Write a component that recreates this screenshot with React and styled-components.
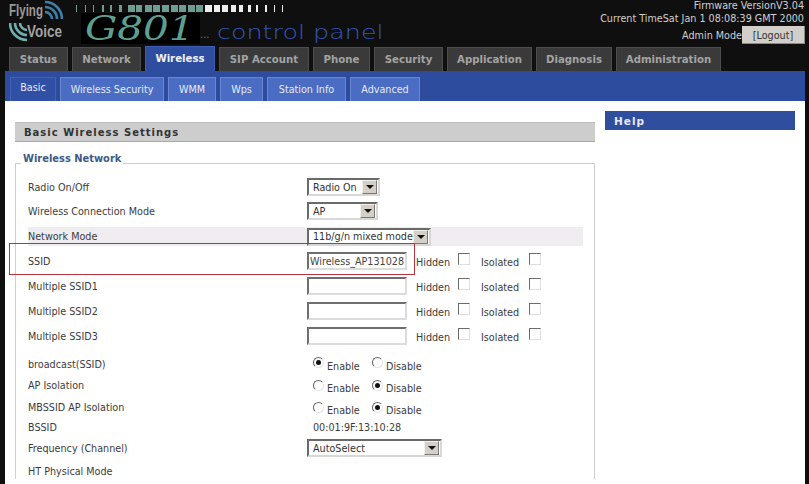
import React from 'react';
import styled, { createGlobalStyle } from 'styled-components';

const GlobalStyle = createGlobalStyle`
  html, body { margin: 0; padding: 0; background: #0f0f0f; }
  body { font-family: "DejaVu Sans Condensed", "DejaVu Sans", sans-serif; font-stretch: condensed; font-size: 10.7px; color: #3c3c3c; }
`;

const Page = styled.div`
  position: relative;
  width: 809px;
  height: 484px;
  overflow: hidden;
  background: #0f0f0f;
`;

const Header = styled.header`
  display: flex;
  justify-content: space-between;
  height: 46px;
  padding-right: 5px;
`;

const Brand = styled.div`
  display: flex;
`;

const Logo = styled.div`
  display: flex;
  flex-direction: column;
  width: 54px;
  margin-left: 9px;
`;

const LogoRow = styled.div`
  display: flex;
  align-items: center;
  height: 21px;
`;

const LogoWord = styled.span`
  display: block;
  flex: none;
  width: ${p => p.$w}px;
  font-family: "Liberation Sans", sans-serif;
  font-stretch: normal;
  font-weight: 700;
  font-size: 16px;
  line-height: 16px;
  color: ${p => p.$color};
  transform: scaleX(${p => p.$x});
  transform-origin: left center;
`;

const Product = styled.div`
  display: flex;
  flex-direction: column;
  margin-left: 13px;
  padding-top: 5px;
`;

const Ticks = styled.div`
  display: flex;
  align-items: flex-start;
  height: 8px;
`;

const Tick = styled.i`
  display: block;
  flex: none;
  width: ${p => p.$w}px;
  height: 7px;
  margin-right: ${p => 8.6 - p.$w}px;
  background: ${p => p.$lit ? '#eeeeee' : '#6f9c90'};
`;

const Model = styled.div`
  display: flex;
  align-items: center;
  height: 31px;
`;

// stretches a word sideways, the header lettering is wider than any installed face
const Stretched = styled.span`
  display: inline-block;
  transform: scaleX(${p => p.$x});
  transform-origin: left center;
`;

const ModelName = styled.span`
  display: block;
  width: 119px;
  margin-left: 5px;
  padding-left: 4px;
  box-sizing: border-box;
  background: #000;
  font-family: "DejaVu Serif", serif;
  font-stretch: normal;
  font-style: italic;
  font-size: 34px;
  line-height: 31px;
  color: #5f9f8e;
  white-space: nowrap;
`;

const Dots = styled.span`
  width: 17px;
  padding-top: 12px;
  font-size: 11px;
  color: #777;
`;

const Tagline = styled.span`
  width: 166px;
  font-family: "DejaVu Sans ExtraLight", "DejaVu Sans", sans-serif;
  font-stretch: normal;
  font-weight: 200;
  font-size: 20px;
  line-height: 26px;
  color: #3358b8;
  white-space: nowrap;
  padding-top: 7px;
`;

const Status = styled.div`
  display: flex;
  flex-direction: column;
  align-items: flex-end;
  color: #cfcfcf;
  line-height: 13px;
  margin-top: -1px;
`;

const AdminLine = styled.div`
  display: flex;
  align-items: center;
  margin-top: 1px;
  margin-right: -1px;
`;

const Logout = styled.span`
  display: block;
  width: 63px;
  height: 18px;
  background: #d2cfca;
  border-bottom: 1px solid #8c8a86;
  border-right: 1px solid #8c8a86;
  box-sizing: border-box;
  color: #333;
  text-align: center;
  line-height: 19px;
`;

const TabRow = styled.nav`
  display: flex;
  align-items: flex-end;
  gap: 4px;
  height: 25px;
  margin-left: 9px;
`;

const Tab = styled.div`
  box-sizing: border-box;
  width: ${p => p.$w}px;
  height: ${p => p.$active ? 25 : 24}px;
  border: 1px solid ${p => p.$active ? '#3f5fb4' : '#4d4d4d'};
  border-bottom: 0;
  background: ${p => p.$active ? '#2e4d9f' : '#3a3a3a'};
  color: ${p => p.$active ? '#eef1f8' : '#a3a3a3'};
  font-family: "DejaVu Sans", sans-serif;
  font-stretch: normal;
  font-weight: 700;
  font-size: 10.2px;
  line-height: 23px;
  text-align: center;
  white-space: nowrap;
`;

const Panel = styled.div`
  width: 800px;
  margin-left: 5px;
`;

const SubBar = styled.div`
  display: flex;
  align-items: flex-end;
  gap: 4px;
  height: 30px;
  padding-left: 5px;
  box-sizing: border-box;
  background: #2d4c9e;
`;

const SubTab = styled.div`
  box-sizing: border-box;
  width: ${p => p.$w}px;
  height: 24px;
  border: 1px solid ${p => p.$active ? '#4262b8' : '#6a87d2'};
  border-bottom: 0;
  background: ${p => p.$active ? '#3050a6' : '#4a6cc2'};
  color: #e6ebf7;
  line-height: ${p => p.$active ? 20 : 24}px;
  text-align: center;
  white-space: nowrap;
`;

const Main = styled.main`
  display: flex;
  gap: 10px;
  height: 383px;
  padding-left: 10px;
  background: #fff;
`;

const Content = styled.section`
  width: 580px;
  padding-top: 21px;
`;

const TitleBar = styled.h2`
  box-sizing: border-box;
  height: 20px;
  margin: 0 0 11px;
  padding-left: 9px;
  background: #cdcdcd;
  border-top: 1px solid #bdbdbd;
  border-bottom: 1px solid #a9a9a9;
  font-family: "DejaVu Sans", sans-serif;
  font-stretch: normal;
  font-weight: 700;
  font-size: 10px;
  line-height: 20px;
  letter-spacing: 1px;
  color: #333;
`;

const Group = styled.fieldset`
  margin: 0;
  padding: 2px 11px 0 12px;
  border: 1px solid #cfcfcf;
  border-bottom: 0;
  min-width: 0;
`;

const GroupTitle = styled.legend`
  margin-left: -7px;
  padding: 0 2px 8px;
  font-weight: 700;
  font-size: 11px;
  line-height: 12px;
  color: #3e5a88;
`;

const Row = styled.div`
  display: grid;
  grid-template-columns: 279px 1fr;
  grid-template-rows: ${p => p.$h}px;
  align-items: center;
  height: ${p => p.$h}px;
  margin: ${p => p.$band ? '4px 0 5px' : '0'};
  background: ${p => p.$band ? '#f0edf1' : 'transparent'};
`;

const Label = styled.span`
  white-space: nowrap;
`;

const Controls = styled.div`
  display: flex;
  align-items: center;
  margin-top: ${p => p.$top || 0}px;
`;

const Select = styled.div`
  display: flex;
  align-items: center;
  justify-content: space-between;
  box-sizing: border-box;
  width: ${p => p.$w}px;
  height: 18px;
  padding: 0 1px 0 4px;
  background: #fff;
  border: 2px solid;
  border-color: #6a6a6a #d8d8d8 #d8d8d8 #6a6a6a;
  color: #333;
  white-space: nowrap;
`;

const Arrow = styled.span`
  display: flex;
  flex: none;
  align-items: center;
  justify-content: center;
  width: 15px;
  height: 14px;
  background: #d4d0c8;
  border: 1px solid;
  border-color: #f2f0ec #777 #777 #f2f0ec;
  box-sizing: border-box;
  &::after {
    content: "";
    border: 4px solid transparent;
    border-top-color: #111;
    border-bottom: 0;
  }
`;

const TextBox = styled.div`
  box-sizing: border-box;
  width: 100px;
  height: 18px;
  padding-left: 1px;
  background: #fff;
  border: 2px solid;
  border-color: #6f6f6f #dcdcdc #dcdcdc #6f6f6f;
  color: #444;
  line-height: 15px;
  white-space: nowrap;
  overflow: hidden;
`;

const OptionText = styled.span`
  width: ${p => p.$w}px;
  margin-left: ${p => p.$gap}px;
  padding-top: 3px;
`;

const CheckBox = styled.span`
  display: block;
  box-sizing: border-box;
  width: 12px;
  height: 12px;
  margin: -4px 0 0 ${p => p.$gap}px;
  border: 1px solid;
  border-color: #6c6c6c #dedede #dedede #6c6c6c;
`;

const Radio = styled.span`
  display: flex;
  align-items: center;
  justify-content: center;
  box-sizing: border-box;
  width: 11px;
  height: 11px;
  margin: -3px 3px 0 ${p => p.$gap}px;
  border-radius: 50%;
  border: 1px solid;
  border-color: #666 #e4e4e4 #e4e4e4 #666;
  &::after {
    content: "";
    display: ${p => p.$on ? 'block' : 'none'};
    width: 5px;
    height: 5px;
    border-radius: 50%;
    background: #111;
  }
`;

const RadioLabel = styled.span`
  width: ${p => p.$w}px;
  padding-top: 4px;
`;

const Mac = styled.span`
  margin-left: 6px;
`;

const HelpColumn = styled.aside`
  width: 190px;
  padding-top: 10px;
`;

const HelpBar = styled.h2`
  box-sizing: border-box;
  height: 19px;
  margin: 0;
  padding-left: 9px;
  background: #2f4e9e;
  font-family: "DejaVu Sans", sans-serif;
  font-stretch: normal;
  font-weight: 700;
  font-size: 10.5px;
  line-height: 20px;
  letter-spacing: 1px;
  color: #e4e9f5;
`;

// red annotation drawn over the screenshot
const Highlight = styled.div`
  position: absolute;
  left: 9px;
  top: 243px;
  width: 406px;
  height: 32px;
  box-sizing: border-box;
  border: 1px solid #b8333f;
  pointer-events: none;
`;

const tabs = [
  ['Status', 59], ['Network', 69], ['Wireless', 70, true], ['SIP Account', 90], ['Phone', 57],
  ['Security', 69], ['Application', 85], ['Diagnosis', 76], ['Administration', 105],
];

const subTabs = [
  ['Basic', 46, true], ['Wireless Security', 104], ['WMM', 48], ['Wps', 43], ['Station Info', 79], ['Advanced', 70],
];

const tickWidths = [1, 1, 1, 2, 2, 3, 7, 6, 7, 7, 7, 7, 7, 7, 7, 7, 6, 6, 5, 4, 3, 2, 2, 1, 1];
const greenTicks = 15;

const Waves = ({ flip, color }) => (
  <svg width="18" height="21" viewBox="0 0 18 21" style={{ flex: 'none', transform: flip ? 'rotate(180deg)' : 'none' }}>
    <g fill="none" stroke={color} strokeWidth="2.6">
      <path d="M0 12 A7 7 0 0 1 7 19" />
      <path d="M0 7 A12 12 0 0 1 12 19" />
      <path d="M0 2 A17 17 0 0 1 17 19" />
    </g>
  </svg>
);

const Options = ({ value }) => (
  <Controls>
    <TextBox>{value}</TextBox>
    <OptionText $w={33} $gap={9}>Hidden</OptionText>
    <CheckBox $gap={9} />
    <OptionText $w={40} $gap={11}>Isolated</OptionText>
    <CheckBox $gap={8} />
  </Controls>
);

const Radios = ({ enabled, top }) => (
  <Controls $top={top}>
    <Radio $gap={6} $on={enabled} />
    <RadioLabel $w={32}>Enable</RadioLabel>
    <Radio $gap={13} $on={!enabled} />
    <RadioLabel $w={36}>Disable</RadioLabel>
  </Controls>
);

const Picker = ({ w, children }) => (
  <Controls>
    <Select $w={w}>{children}<Arrow /></Select>
  </Controls>
);

export default function App() {
  return (
    <Page>
      <GlobalStyle />
      <Header>
        <Brand>
          <Logo>
            <LogoRow>
              <LogoWord $w={36} $x={0.72} $color="#9b9b9b">Flying</LogoWord>
              <Waves color="#3d7fa8" />
            </LogoRow>
            <LogoRow>
              <Waves flip color="#6fb0ad" />
              <LogoWord $w={36} $x={0.84} $color="#a3a3a3">Voice</LogoWord>
            </LogoRow>
          </Logo>
          <Product>
            <Ticks>
              {tickWidths.map((w, i) => <Tick key={i} $w={w} $lit={i >= greenTicks} />)}
            </Ticks>
            <Model>
              <ModelName><Stretched $x={1.19}>G801</Stretched></ModelName>
              <Dots>...</Dots>
              <Tagline><Stretched $x={1.27}>control panel</Stretched></Tagline>
            </Model>
          </Product>
        </Brand>
        <Status>
          <div>Firmware VersionV3.04</div>
          <div>Current TimeSat Jan 1 08:08:39 GMT 2000</div>
          <AdminLine>Admin Mode<Logout>[Logout]</Logout></AdminLine>
        </Status>
      </Header>
      <TabRow>
        {tabs.map(([name, w, active]) => <Tab key={name} $w={w} $active={active}>{name}</Tab>)}
      </TabRow>
      <Panel>
        <SubBar>
          {subTabs.map(([name, w, active]) => <SubTab key={name} $w={w} $active={active}>{name}</SubTab>)}
        </SubBar>
        <Main>
          <Content>
            <TitleBar>Basic Wireless Settings</TitleBar>
            <Group>
              <GroupTitle>Wireless Network</GroupTitle>
              <Row $h={24}><Label>Radio On/Off</Label><Picker w={73}>Radio On</Picker></Row>
              <Row $h={24}><Label>Wireless Connection Mode</Label><Picker w={71}>AP</Picker></Row>
              <Row $h={19} $band><Label>Network Mode</Label><Picker w={124}>11b/g/n mixed mode</Picker></Row>
              <Row $h={20}><Label>SSID</Label><Options value="Wireless_AP131028" /></Row>
              <Row $h={30}><Label>Multiple SSID1</Label><Options /></Row>
              <Row $h={20}><Label>Multiple SSID2</Label><Options /></Row>
              <Row $h={30}><Label>Multiple SSID3</Label><Options /></Row>
              <Row $h={26}><Label>broadcast(SSID)</Label><Radios enabled /></Row>
              <Row $h={16}><Label>AP Isolation</Label><Radios top={3} /></Row>
              <Row $h={28}><Label>MBSSID AP Isolation</Label><Radios top={3} /></Row>
              <Row $h={12}><Label>BSSID</Label><Controls><Mac>00:01:9F:13:10:28</Mac></Controls></Row>
              <Row $h={30}><Label>Frequency (Channel)</Label><Picker w={135}>AutoSelect</Picker></Row>
              <Row $h={16}><Label>HT Physical Mode</Label></Row>
            </Group>
          </Content>
          <HelpColumn>
            <HelpBar>Help</HelpBar>
          </HelpColumn>
        </Main>
      </Panel>
      <Highlight />
    </Page>
  );
}
